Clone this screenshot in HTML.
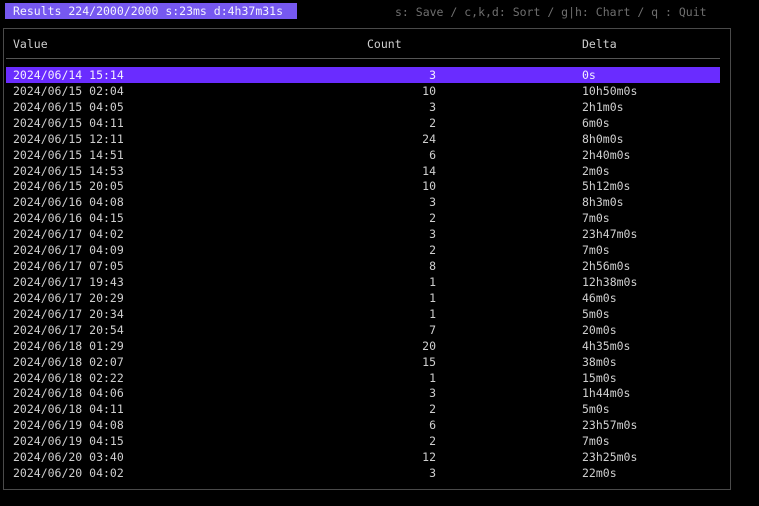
<!DOCTYPE html>
<html><head><meta charset="utf-8"><style>
html,body{margin:0;padding:0;background:#000;width:759px;height:506px;overflow:hidden;font-family:"DejaVu Sans Mono","Liberation Mono",monospace;font-size:11.5px;color:#cfcfcf}
.a{position:absolute;white-space:pre;line-height:16px}
#title{position:absolute;left:5px;top:3px;width:292px;height:16px;background:#7658f0;color:#f2f2ff}
#hint{left:395px;top:4px;color:#6f6f6f}
#box{position:absolute;left:3px;top:28px;width:726px;height:460px;border:1px solid #4a4a4a}
#sep{position:absolute;left:6px;top:58px;width:714px;height:1px;background:#555}
#sel{position:absolute;left:6px;top:67px;width:714px;height:16px;background:#6a2cff}
.c{text-align:right;width:60px}
</style></head><body>
<div id="title"><span class="a" style="left:8px;top:0">Results 224/2000/2000 s:23ms d:4h37m31s</span></div>
<div class="a" id="hint">s: Save / c,k,d: Sort / g|h: Chart / q : Quit</div>
<div id="box"></div>
<div class="a" style="left:13px;top:36px">Value</div>
<div class="a" style="left:367px;top:36px">Count</div>
<div class="a" style="left:582px;top:36px">Delta</div>
<div id="sep"></div>
<div id="sel"></div>
<div id="rows"></div>
<script>
var d=[["2024/06/14 15:14",3,"0s"],["2024/06/15 02:04",10,"10h50m0s"],["2024/06/15 04:05",3,"2h1m0s"],["2024/06/15 04:11",2,"6m0s"],["2024/06/15 12:11",24,"8h0m0s"],["2024/06/15 14:51",6,"2h40m0s"],["2024/06/15 14:53",14,"2m0s"],["2024/06/15 20:05",10,"5h12m0s"],["2024/06/16 04:08",3,"8h3m0s"],["2024/06/16 04:15",2,"7m0s"],["2024/06/17 04:02",3,"23h47m0s"],["2024/06/17 04:09",2,"7m0s"],["2024/06/17 07:05",8,"2h56m0s"],["2024/06/17 19:43",1,"12h38m0s"],["2024/06/17 20:29",1,"46m0s"],["2024/06/17 20:34",1,"5m0s"],["2024/06/17 20:54",7,"20m0s"],["2024/06/18 01:29",20,"4h35m0s"],["2024/06/18 02:07",15,"38m0s"],["2024/06/18 02:22",1,"15m0s"],["2024/06/18 04:06",3,"1h44m0s"],["2024/06/18 04:11",2,"5m0s"],["2024/06/19 04:08",6,"23h57m0s"],["2024/06/19 04:15",2,"7m0s"],["2024/06/20 03:40",12,"23h25m0s"],["2024/06/20 04:02",3,"22m0s"]];
var h="";
for(var i=0;i<d.length;i++){var t=(67+15.92*i).toFixed(1);var col=i==0?"color:#f4f0ff;":"";
h+='<div class="a" style="'+col+'left:13px;top:'+t+'px">'+d[i][0]+'</div><div class="a c" style="'+col+'left:376px;top:'+t+'px">'+d[i][1]+'</div><div class="a" style="'+col+'left:582px;top:'+t+'px">'+d[i][2]+'</div>';}
document.getElementById("rows").innerHTML=h;
</script>
</body></html>
